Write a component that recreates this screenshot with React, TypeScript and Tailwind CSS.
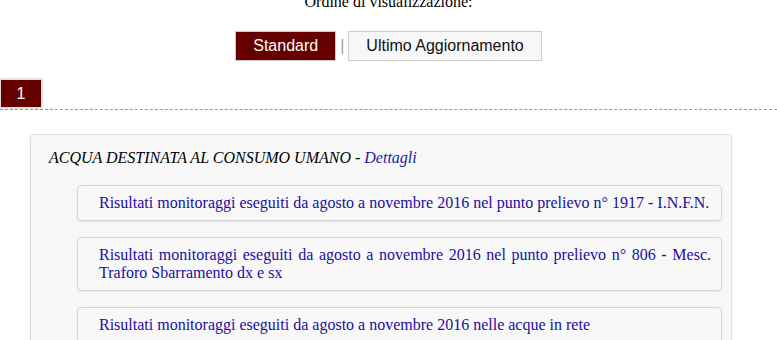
const items = [
  'Risultati monitoraggi eseguiti da agosto a novembre 2016 nel punto prelievo n° 1917 - I.N.F.N.',
  'Risultati monitoraggi eseguiti da agosto a novembre 2016 nel punto prelievo n° 806 - Mesc. Traforo Sbarramento dx e sx',
  'Risultati monitoraggi eseguiti da agosto a novembre 2016 nelle acque in rete',
];

function App() {
  return (
    <div className="h-[340px] overflow-hidden bg-white font-['Liberation_Serif',serif] text-[16px] text-black">
      <p className="-mt-[7px] text-center leading-[18px]">Ordine di visualizzazione:</p>
      <div className="mt-[20px] flex items-center justify-center gap-[4px] font-['Liberation_Sans',Arial,sans-serif] text-[16px]">
        <button className="h-[30px] border border-[#ccc] bg-[#660000] px-[17px] text-white">Standard</button>
        <span className="text-[#999]">|</span>
        <button className="h-[30px] border border-[#ccc] bg-[#f7f7f7] px-[17px] text-[#111]">Ultimo Aggiornamento</button>
      </div>
      <div className="mt-[18px] border-b border-dashed border-[#999] pb-[1px]">
        <div className="flex h-[29px] w-[42px] items-center justify-center border border-[#ddd] bg-[#660000] font-['Liberation_Sans',Arial,sans-serif] text-[16px] text-white shadow-[0_0_2px_rgba(0,0,0,0.3)]">
          1
        </div>
      </div>
      <div className="ml-[30px] mt-[24px] w-[702px] rounded-[4px] border border-[#ddd] bg-[#f8f8f8] pl-[18px] pr-[9px] pt-[13px] shadow-[0_1px_2px_rgba(0,0,0,0.1)]">
        <p className="italic leading-[20px]">
          ACQUA DESTINATA AL CONSUMO UMANO - <a className="text-[#1a1aa6]">Dettagli</a>
        </p>
        <div className="ml-[28px] mt-[17px] flex flex-col gap-[16px]">
          {items.map((t) => (
            <div key={t} className="rounded-[4px] border border-[#d6d6d6] bg-[#f8f8f8] py-[8px] pl-[21px] pr-[10px] text-justify leading-[18px] text-[#1a0fa0] shadow-[0_1px_2px_rgba(0,0,0,0.08)]">
              {t}
            </div>
          ))}
        </div>
      </div>
    </div>
  );
}

export default App;
